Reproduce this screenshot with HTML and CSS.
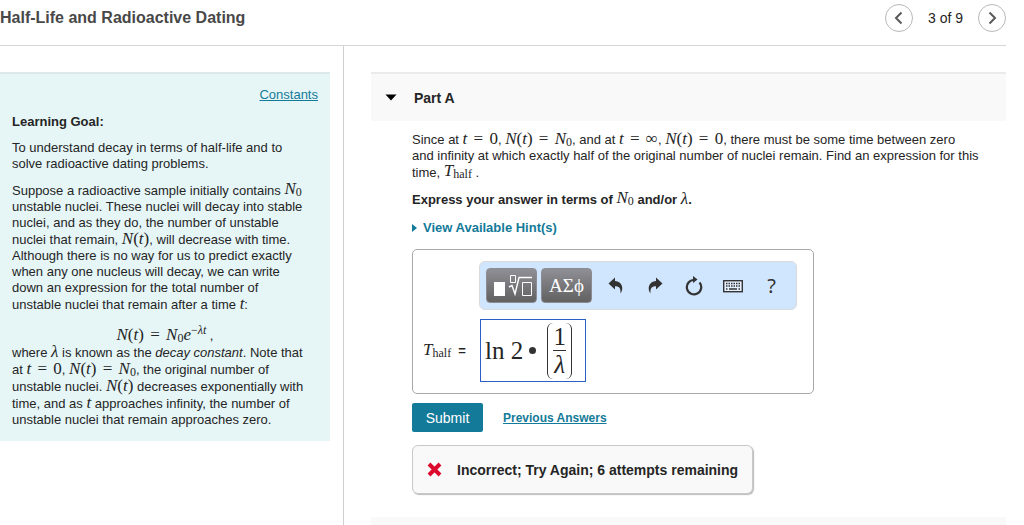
FILE: index.html
```html
<!DOCTYPE html>
<html lang="en">
<head>
    <meta charset="UTF-8">
    <meta name="viewport" content="width=device-width, initial-scale=1.0">
    <title>Half-Life and Radioactive Dating</title>
    <link rel="stylesheet" href="styles.css">
</head>
<body>
    <header class="page-header">
        <h1>Half-Life and Radioactive Dating</h1>
        <nav class="pager">
            <button type="button" class="pager-btn" aria-label="Previous item">
                <svg width="10" height="14" viewBox="0 0 10 14"><path d="M7.5 1.5 L2 7 L7.5 12.5"/></svg>
            </button>
            <span>3 of 9</span>
            <button type="button" class="pager-btn" aria-label="Next item">
                <svg width="10" height="14" viewBox="0 0 10 14"><path d="M2.5 1.5 L8 7 L2.5 12.5"/></svg>
            </button>
        </nav>
    </header>

    <main class="content">
        <aside class="sidebar">
            <div class="intro">
                <a href="#" class="constants">Constants</a>
                <h2>Learning Goal:</h2>
                <p>To understand decay in terms of half-life and to<br>
                    solve radioactive dating problems.</p>
                <p>Suppose a radioactive sample initially contains <span class="math raised"><i>N</i><sub>0</sub></span><br>
                    unstable nuclei. These nuclei will decay into stable<br>
                    nuclei, and as they do, the number of unstable<br>
                    nuclei that remain, <span class="math"><i>N</i>(<i>t</i>)</span>, will decrease with time.<br>
                    Although there is no way for us to predict exactly<br>
                    when any one nucleus will decay, we can write<br>
                    down an expression for the total number of<br>
                    unstable nuclei that remain after a time <span class="math"><i>t</i></span>:</p>
                <div class="equation"><span class="math"><i>N</i>(<i>t</i>) <b>=</b> <i>N</i><sub>0</sub><i>e</i><sup>−<i>λt</i></sup></span> ,</div>
                <p>where <span class="math"><i>λ</i></span> is known as the <em>decay constant</em>. Note that<br>
                    at <span class="math"><i>t</i> <b>=</b> 0</span>, <span class="math"><i>N</i>(<i>t</i>) <b>=</b> <i>N</i><sub>0</sub></span>, the original number of<br>
                    unstable nuclei. <span class="math"><i>N</i>(<i>t</i>)</span> decreases exponentially with<br>
                    time, and as <span class="math"><i>t</i></span> approaches infinity, the number of<br>
                    unstable nuclei that remain approaches zero.</p>
            </div>
        </aside>

        <section class="problem">
            <button type="button" class="part-header" aria-expanded="true">
                <svg width="12" height="7" viewBox="0 0 12 7"><path d="M0.5 0.5 H11.5 L6 6.5 Z"/></svg>
                <span>Part A</span>
            </button>
            <div class="part-body">
                <p>Since at <span class="math"><i>t</i> <b>=</b> 0</span>, <span class="math"><i>N</i>(<i>t</i>) <b>=</b> <i>N</i><sub>0</sub></span>, and at <span class="math"><i>t</i> <b>=</b> ∞</span>, <span class="math"><i>N</i>(<i>t</i>) <b>=</b> 0</span>, there must be some time between zero<br>
                    and infinity at which exactly half of the original number of nuclei remain. Find an expression for this<br>
                    time, <span class="math raised"><i>T</i><sub>half</sub></span> .</p>
                <p class="instruction">Express your answer in terms of <span class="math raised"><i>N</i><sub>0</sub></span> and/or <span class="math"><i>λ</i></span>.</p>
                <button type="button" class="hints">
                    <svg width="5" height="8" viewBox="0 0 5 8"><path d="M0 0 L5 4 L0 8 Z"/></svg>
                    View Available Hint(s)
                </button>

                <div class="answer-box">
                    <div class="toolbar">
                        <button type="button" class="tool-btn" aria-label="Templates">
                            <svg width="40" height="24" viewBox="0 0 40 24">
                                <rect x="2" y="8" width="11" height="14" fill="#fff"/>
                                <path d="M18.5 1.5 H23.5 V8.5 H18.5 Z M30.5 8.5 H39.5 V21.5 H30.5 Z" fill="none" stroke="#fff"/>
                                <path d="M17 13 L20 11.5 L23 20 L27 3.5 H40" fill="none" stroke="#fff" stroke-width="1.4"/>
                            </svg>
                        </button>
                        <button type="button" class="tool-btn">ΑΣϕ</button>
                        <button type="button" class="tool-icon" aria-label="Undo">
                            <svg width="16" height="18" viewBox="0 0 16 18"><path d="M7 0.5 L0.5 6.5 L7 12.5 V9.3 C10.5 9.3 13 10.5 12.5 16.5 C16 12 14.5 4.5 7 4 Z"/></svg>
                        </button>
                        <button type="button" class="tool-icon" aria-label="Redo">
                            <svg width="16" height="18" viewBox="0 0 16 18"><path d="M9 0.5 L15.5 6.5 L9 12.5 V9.3 C5.5 9.3 3 10.5 3.5 16.5 C0 12 1.5 4.5 9 4 Z"/></svg>
                        </button>
                        <button type="button" class="tool-icon" aria-label="Reset">
                            <svg width="18" height="20" viewBox="0 0 18 20">
                                <path d="M9 4 A7.2 7.2 0 1 0 14.5 6.5" fill="none" stroke="#333" stroke-width="2.2"/>
                                <path d="M8 0 L12.5 3.5 L8 7 Z"/>
                            </svg>
                        </button>
                        <button type="button" class="tool-icon" aria-label="Keyboard shortcuts">
                            <svg width="20" height="14" viewBox="0 0 20 14">
                                <rect x="0.7" y="1.7" width="18.6" height="11" fill="#e6f1ff" stroke="#333" stroke-width="1.4"/>
                                <path d="M3 4.5 H17 M3 7 H17" fill="none" stroke="#333" stroke-width="1.4" stroke-dasharray="1.5 1"/>
                                <path d="M3 10 H4.5 M6 10 H14 M15.5 10 H17" fill="none" stroke="#333" stroke-width="1.4"/>
                            </svg>
                        </button>
                        <button type="button" class="tool-icon help" aria-label="Help">?</button>
                    </div>
                    <div class="answer-row">
                        <span class="answer-label" id="answerLabel"><span class="math"><i>T</i><sub>half</sub></span>&nbsp; =</span>
                        <div class="answer-field" role="textbox" contenteditable="true" aria-labelledby="answerLabel">
                            <span>ln 2</span>
                            <span class="dot"></span>
                            <span class="paren">
                                <span class="fraction"><span>1</span><i>λ</i></span>
                            </span>
                        </div>
                    </div>
                </div>

                <div class="actions">
                    <button type="submit" class="submit">Submit</button>
                    <a href="#">Previous Answers</a>
                </div>

                <div class="feedback" role="status">
                    <svg width="15" height="15" viewBox="0 0 15 15"><path d="M2 2 L13 13 M13 2 L2 13"/></svg>
                    <span>Incorrect; Try Again; 6 attempts remaining</span>
                </div>
            </div>
            <div class="next-part"></div>
        </section>
    </main>
</body>
</html>
```
FILE: styles.css
```css
* {
    box-sizing: border-box;
}

body {
    margin: 0;
    min-height: 100vh;
    display: flex;
    flex-direction: column;
    overflow: hidden;
    font-family: "Liberation Sans", Arial, sans-serif;
    font-size: 13px;
    line-height: 16px;
    color: #252525;
    background: #fff;
}

button {
    font: inherit;
    color: inherit;
    border: none;
    background: none;
    padding: 0;
    cursor: pointer;
}

a {
    color: #147a99;
}

p {
    margin: 0 0 10px;
}

/* header */
.page-header {
    display: flex;
    justify-content: space-between;
    align-items: flex-start;
    height: 46px;
    margin-right: 18px;
    border-bottom: 1px solid #d6d6d6;
}

h1 {
    margin: 8px 0 0;
    font-size: 16px;
    line-height: 20px;
    color: #484848;
}

.pager {
    display: flex;
    align-items: center;
    gap: 15px;
    padding-top: 4px;
    font-size: 14px;
}

.pager-btn {
    display: flex;
    align-items: center;
    justify-content: center;
    width: 28px;
    height: 28px;
    border: 1px solid #b8b8b8;
    border-radius: 50%;
}

.pager-btn path {
    fill: none;
    stroke: #5a5a5a;
    stroke-width: 2;
}

/* columns */
.content {
    flex: 1;
    display: grid;
    grid-template-columns: 344px 1fr;
}

.sidebar {
    padding: 26px 13px 0 0;
    border-right: 1px solid #cfcfcf;
}

.intro {
    padding: 13px 12px 3px;
    border-top: 2px solid #dde8ea;
    background: #e6f6f7;
}

.constants {
    display: block;
    text-align: right;
}

h2 {
    margin: 11px 0 10px;
    font-size: 13px;
    line-height: 16px;
}

/* formulas */
.math {
    font-family: "Liberation Serif", "Times New Roman", serif;
    font-size: 17px;
    font-weight: normal;
    white-space: nowrap;
}

.math b {
    font-weight: normal;
    padding: 0 2px;
}

.math sub,
.math sup {
    font-size: 12px;
    line-height: 0;
}

.math sub {
    vertical-align: -2px;
}

.math sup {
    vertical-align: 6px;
}

.raised {
    line-height: 14px;
    vertical-align: 1px;
}

.equation {
    padding-top: 4px;
    text-align: center;
}

/* problem */
.problem {
    display: flex;
    flex-direction: column;
    padding: 26px 18px 0 27px;
}

.part-header {
    display: flex;
    align-items: center;
    gap: 17px;
    height: 49px;
    padding-left: 14px;
    border-top: 2px solid #ebebeb;
    background: #f9f9f9;
    font-size: 14px;
    font-weight: bold;
}

.part-body {
    padding: 10px 0 23px 41px;
}

.instruction {
    font-weight: bold;
}

.hints {
    display: flex;
    align-items: center;
    gap: 6px;
    margin-top: 12px;
    color: #147a99;
    font-weight: bold;
}

.hints path {
    fill: #147a99;
}

.answer-box {
    width: 402px;
    max-width: 100%;
    height: 145px;
    margin-top: 13px;
    padding: 11px 10px;
    border: 1px solid #a8a8a8;
    border-radius: 5px;
}

.toolbar {
    display: flex;
    align-items: center;
    width: 318px;
    height: 49px;
    margin-left: 56px;
    padding-left: 6px;
    border: 1px solid #dadada;
    border-radius: 6px;
    background: #d0e5fe;
}

.tool-btn {
    display: flex;
    align-items: center;
    justify-content: center;
    width: 51px;
    height: 35px;
    margin-right: 4px;
    border: 1px solid #8c8c92;
    border-radius: 4px;
    background: linear-gradient(#8f8f96, #616161);
    color: #fff;
    font-family: "Liberation Serif", serif;
    font-size: 19px;
}

.tool-icon {
    display: flex;
    align-items: center;
    justify-content: center;
    width: 39px;
    height: 35px;
    color: #333;
}

.tool-icon path {
    fill: #333;
}

.tool-icon path[fill="none"] {
    fill: none;
}

.help {
    font-family: "Noto Sans", sans-serif;
    font-size: 20px;
}

.answer-row {
    display: flex;
    align-items: center;
    gap: 13px;
    margin-top: 9px;
}

.answer-label {
    width: 44px;
    font-weight: bold;
    white-space: nowrap;
}

.answer-field {
    display: flex;
    align-items: center;
    height: 63px;
    width: 106px;
    padding: 0 4px;
    border: 1px solid #2c5fc4;
    font-family: "Liberation Serif", serif;
    font-size: 25px;
    line-height: 28px;
    white-space: nowrap;
}

.dot {
    width: 7px;
    height: 7px;
    margin: 0 11px 0 6px;
    border-radius: 50%;
    background: #333;
}

.paren {
    height: 56px;
    padding: 0 5px;
    border-left: 1px solid #333;
    border-right: 1px solid #333;
    border-radius: 6px;
}

.fraction {
    display: flex;
    flex-direction: column;
    align-items: center;
    width: 13px;
    line-height: 27px;
}

.fraction span {
    border-bottom: 1px solid #333;
}

.actions {
    display: flex;
    align-items: center;
    gap: 20px;
    margin-top: 9px;
}

.actions a {
    font-size: 12px;
    font-weight: bold;
}

.submit {
    width: 71px;
    height: 29px;
    border-radius: 2px;
    background: #147a99;
    color: #fff;
    font-size: 14px;
}

.feedback {
    display: flex;
    align-items: center;
    gap: 15px;
    width: fit-content;
    height: 49px;
    margin-top: 13px;
    padding: 0 14px;
    border: 1px solid #c8c8c8;
    border-radius: 6px;
    box-shadow: 1px 1px 1px #bbb;
    background: #f9f9f9;
    font-size: 14px;
    font-weight: bold;
}

.feedback path {
    fill: none;
    stroke: #dc0a2d;
    stroke-width: 4;
}

.next-part {
    flex: 1;
    background: #f9f9f9;
}
```
